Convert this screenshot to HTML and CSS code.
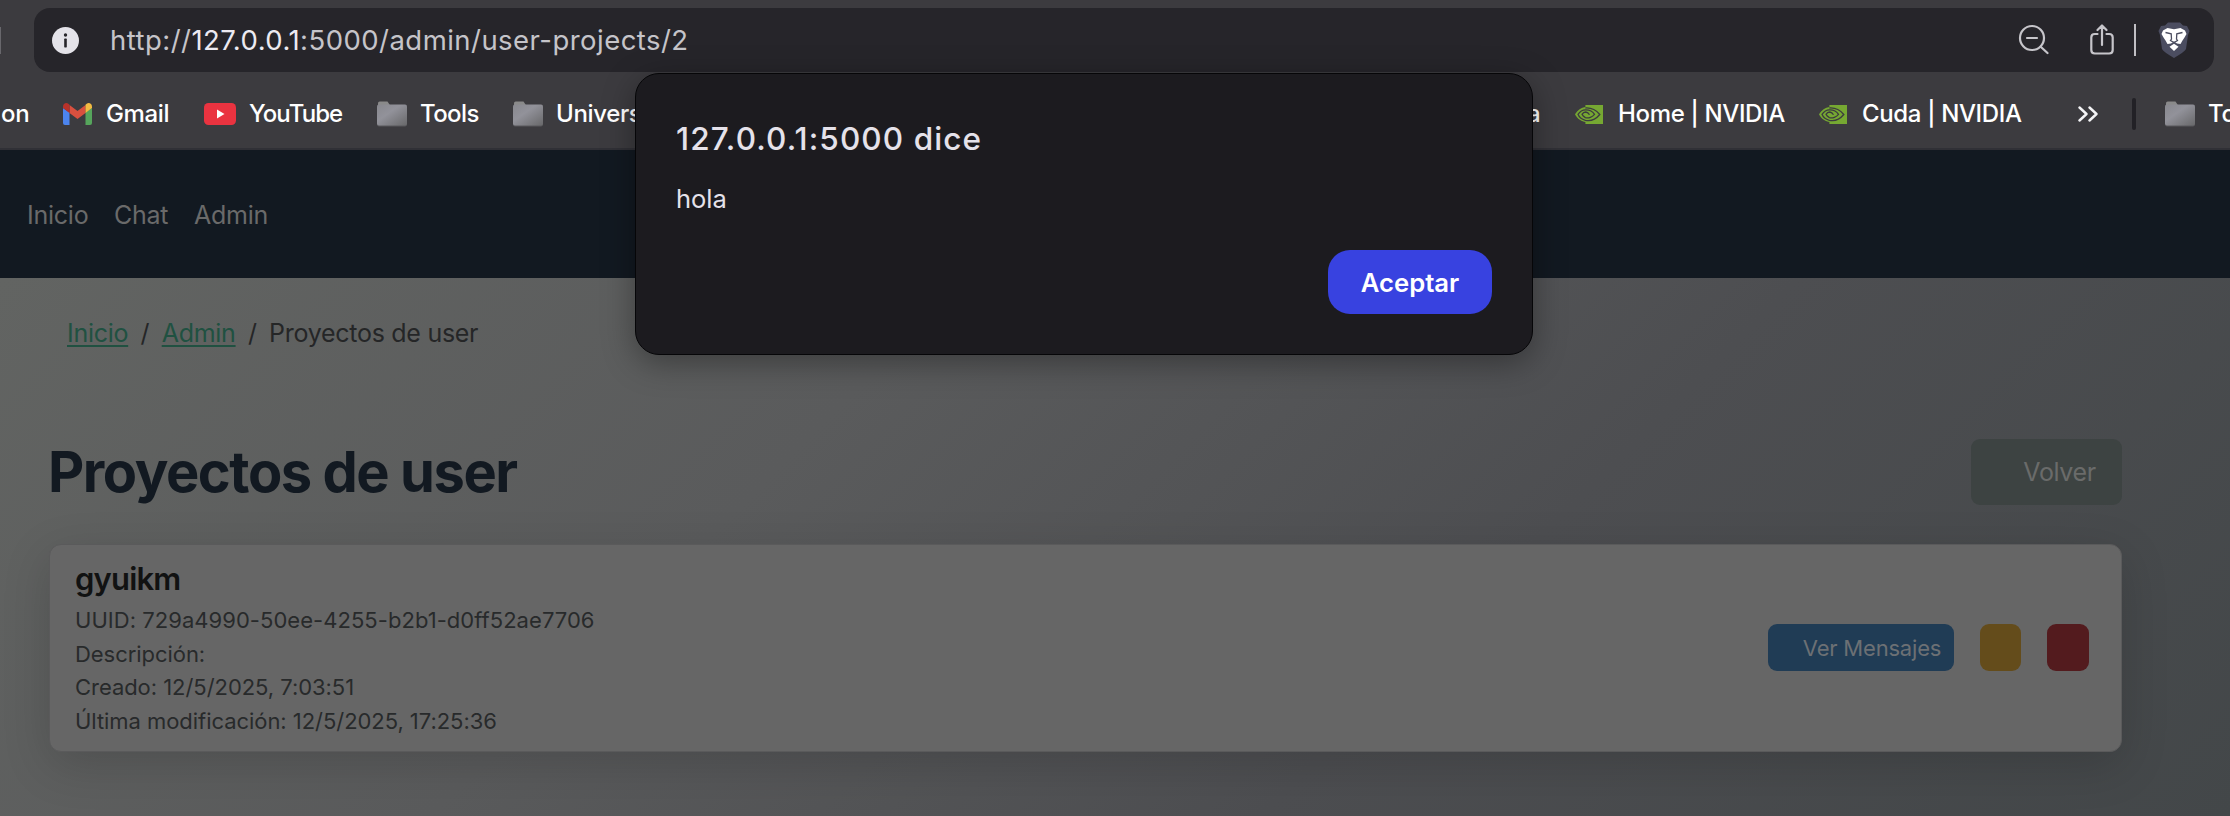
FILE: index.html
```
<!DOCTYPE html>
<html lang="es">
<head>
<meta charset="utf-8">
<title>Proyectos de user</title>
<link rel="stylesheet" href="styles.css">
</head>
<body>
<svg class="defs" width="0" height="0" aria-hidden="true">
  <defs>
    <linearGradient id="fold" x1="0" y1="0" x2="1" y2="1">
      <stop offset="0" stop-color="#88888e"/><stop offset=".4" stop-color="#92929a"/><stop offset="1" stop-color="#68686a"/>
    </linearGradient>
    <symbol id="folder" viewBox="0 0 30 26">
      <path d="M1 5V2.200Q1 .5 2.700 .5H10.500L12.500 3.500V5z" fill="#8a8a8a"/>
      <rect x="0" y="4" width="30" height="21.500" rx="2" fill="#58585c"/>
      <rect x="0" y="3.500" width="30" height="21" rx="2" fill="url(#fold)"/>
    </symbol>
    <symbol id="nvidia" viewBox="0 0 28 19">
      <path d="M10.400 0H28V19H10.400V17C4.500 16.200 1 11.500 0 9.300C2.500 5.200 6.200 2.400 10.400 1.900z" fill="#76a832"/>
      <path d="M10.400 3C17 2.500 21 5 24.800 9.500C21 14 15.500 16.500 10.400 15.300C6 14 3.800 11.500 3 9.300C5 6.500 7.500 5 10.400 4.900C15 4.700 18 7 19.500 9.300C17.500 11.800 13.500 13.700 10.400 12.600C8.300 11.500 7.300 10 7 9.300C8 7.600 9.500 7 10.800 7C13 7.200 13.800 8.500 14.500 9.800" fill="none" stroke="#3c3b3f" stroke-width="1.300"/>
    </symbol>
  </defs>
</svg>
<header class="chrome">
  <div class="toolbar">
    <span class="edge"></span>
    <div class="omnibox">
      <svg class="info" viewBox="0 0 27 27"><circle cx="13.500" cy="13.500" r="13.500" fill="#e4e3e9"/><circle cx="13.500" cy="8" r="1.700" fill="#26252a"/><rect x="12.200" y="11.600" width="2.600" height="8.800" rx=".6" fill="#26252a"/></svg>
      <span class="url">http://<b>127.0.0.1</b>:5000/admin/user-projects/2</span>
      <svg class="zoomout" viewBox="0 0 32 32"><g fill="none" stroke="#c6c5ca" stroke-width="2.200" stroke-linecap="round"><circle cx="14" cy="14" r="12"/><path d="M9 14h10M22.700 22.700L29.500 29"/></g></svg>
      <svg class="share" viewBox="0 0 24 32"><g fill="none" stroke="#c6c5ca" stroke-width="2.200" stroke-linecap="round" stroke-linejoin="round"><path d="M7.500 10H4.800Q1.300 10 1.300 13.500V26Q1.300 29.500 4.800 29.500H19.200Q22.700 29.500 22.700 26V13.500Q22.700 10 19.200 10H16.500M12 21V2M7.500 6L12 1.500L16.500 6"/></g></svg>
      <span class="vr"></span>
      <svg class="brave" viewBox="0 0 32 36"><path d="M10 .5H22L25 3.500L29 4L31.500 9L30 13L28 27Q27 29.500 16 36Q5 29.500 4 27L2 13L.5 9L3 4L7 3.500z" fill="#4b4d60"/><path d="M9.500 6L16 7.200L22.500 6L27 8.500L28.500 12L26.500 15.500L24.500 18.500L22.500 22L19 21.500L16 19.500L13 21.500L9.500 22L7.500 18.500L5.500 15.500L3.500 12L5 8.500z" fill="#fff"/><path d="M16 21.800L20.500 24.800L16 29L11.500 24.800z" fill="#fff"/><path d="M7.500 10.500L13.200 11.800L13.500 17L12.500 18.500L16 20.500L19.500 18.500L18.500 17L18.800 11.800L24.500 10.500" fill="none" stroke="#4b4d60" stroke-width="1.300"/></svg>
    </div>
  </div>
  <nav class="bookmarks">
    <span class="bm on">on</span>
    <span class="bm gmail"><svg viewBox="0 0 29 22"><path d="M0 5L6.500 9.500V22H2Q0 22 0 20z" fill="#4c84ee"/><path d="M29 5L22.500 9.500V22H27Q29 22 29 20z" fill="#56a55c"/><path d="M6.500 2V10L14.500 16L22.500 10V2L14.500 8z" fill="#d9503f"/><path d="M0 5V3.500Q.3 0 3.500 0Q5 .2 6.500 1.700V10L0 5z" fill="#b8322a"/><path d="M29 5V3.500Q28.700 0 25.500 0Q24 .2 22.500 1.700V10L29 5z" fill="#f3bb42"/></svg>Gmail</span>
    <span class="bm youtube"><svg viewBox="0 0 32 22"><rect width="32" height="22" rx="4.500" fill="#ea3340"/><path d="M13 6.500V15.500L20.500 11z" fill="#fff"/></svg>YouTube</span>
    <span class="bm tools"><svg><use href="#folder"/></svg>Tools</span>
    <span class="bm univ"><svg><use href="#folder"/></svg>Universidad</span>
    <span class="bm cut">a</span>
    <span class="bm home"><svg><use href="#nvidia"/></svg>Home | NVIDIA</span>
    <span class="bm cuda"><svg><use href="#nvidia"/></svg>Cuda | NVIDIA</span>
    <svg class="more" viewBox="0 0 20 16"><path d="M1.500 1.500L8.500 8L1.500 14.500M11.500 1.500L18.500 8L11.500 14.500" fill="none" stroke="#f4f4f6" stroke-width="2.400" stroke-linecap="round" stroke-linejoin="round"/></svg>
    <span class="split"></span>
    <span class="bm todos"><svg><use href="#folder"/></svg>To</span>
  </nav>
</header>
<nav class="navbar"><a class="n1">Inicio</a><a class="n2">Chat</a><a class="n3">Admin</a></nav>
<main class="page">
  <nav class="crumbs"><a class="c1">Inicio</a><span class="sl">/</span><a class="c2">Admin</a><span class="sl">/</span><span class="c3">Proyectos de user</span></nav>
  <div class="heading"><h1>Proyectos de user</h1><button class="back">Volver</button></div>
  <section class="card">
    <div class="details">
      <h2>gyuikm</h2>
      <p class="uuid">UUID: 729a4990-50ee-4255-b2b1-d0ff52ae7706</p>
      <p>Descripción:</p>
      <p>Creado: 12/5/2025, 7:03:51</p>
      <p>Última modificación: 12/5/2025, 17:25:36</p>
    </div>
    <div class="actions"><button class="view">Ver Mensajes</button><button class="edit" aria-label="Editar"></button><button class="del" aria-label="Eliminar"></button></div>
  </section>
</main>
<div class="dialog" role="dialog">
  <div class="dtitle">127.0.0.1:5000 dice</div>
  <div class="dmsg">hola</div>
  <button class="ok">Aceptar</button>
</div>
</body>
</html>
```
FILE: styles.css
```
* { box-sizing: border-box; }
body { margin: 0; width: 2230px; height: 816px; overflow: hidden; font-family: Inter, "Liberation Sans", sans-serif; background: #3c3b3f; position: relative; }
.defs { position: absolute; }
button { font: inherit; border: 0; padding: 0; }
span, a { white-space: nowrap; }
.chrome { height: 150px; background: #3c3b3f; border-bottom: 2px solid #303036; overflow: hidden; }
.toolbar { display: flex; padding-top: 8px; height: 80px; }
.edge { width: 1px; height: 27px; margin: 19px 33px 0 0; background: #68676c; }
.omnibox { width: 2180px; height: 64px; border-radius: 16px; background: #26252a; display: flex; align-items: center; }
.info { width: 27px; height: 27px; margin-left: 18px; flex: none; }
.url { margin-left: 31px; flex: 1; font-size: 27.500px; line-height: 64px; letter-spacing: .46px; color: #c5c4c9; }
.url b { font-weight: 400; color: #eceaf1; }
.zoomout { width: 32px; height: 32px; margin-right: 40px; }
.share { width: 24px; height: 32px; margin-right: 20px; }
.vr { width: 2px; height: 32px; background: #c0bfc4; margin-right: 22px; }
.brave { width: 32px; height: 36px; margin-right: 24px; }
.bookmarks { display: flex; align-items: center; height: 68px; color: #fff; font-size: 24px; }
.bm { display: flex; align-items: center; flex: none; font-weight: 500; line-height: 68px; letter-spacing: -.35px; }
.bm svg { flex: none; width: 30px; height: 26px; }
.on { width: 63px; padding-left: 1px; }
.gmail { width: 141px; }
.gmail svg { width: 29px; height: 22px; margin-right: 14px; }
.youtube { width: 173px; letter-spacing: -.9px; }
.youtube svg { width: 32px; height: 22px; margin-right: 13px; }
.tools { width: 136px; letter-spacing: -.6px; }
.tools svg, .univ svg, .todos svg { margin-right: 13px; }
.univ { width: 1014px; }
.cut { width: 48px; }
.home { width: 244px; }
.cuda { width: 259px; }
.bm.home svg, .bm.cuda svg { width: 28px; height: 19px; margin-right: 15px; }
.more { width: 20px; height: 16px; flex: none; margin-right: 34px; }
.split { width: 4px; height: 32px; border-radius: 2px; background: #222126; flex: none; margin-right: 29px; }
.navbar { height: 128px; background: #121921; display: flex; align-items: center; padding: 1px 0 0 27px; font-size: 25px; letter-spacing: -.25px; color: #6a6a6a; }
.n1 { width: 87px; }
.n2 { width: 80px; }
.page { height: 538px; padding-left: 49px; background: linear-gradient(135deg, #626462 0%, #5a5b5c 35%, #4d4e51 65%, #434749 100%); }
.crumbs { display: flex; height: 110px; padding-left: 18px; line-height: 111px; font-size: 25px; letter-spacing: -.28px; color: #252627; }
.crumbs a { color: #205141; text-decoration: underline; text-decoration-thickness: 2px; text-underline-offset: 3px; }
.sl { width: 33.500px; text-align: center; }
.heading { display: flex; justify-content: space-between; width: 2073px; padding-top: 51px; height: 156px; }
h1 { margin: 0 0 0 -1px; font-size: 56px; line-height: 67px; font-weight: 700; letter-spacing: -1.450px; color: #121921; }
.back { width: 151px; height: 66px; border-radius: 9px; background: #3d4342; color: #6a6b6a; font-size: 25px; letter-spacing: -.4px; padding-left: 26px; }
.card { display: flex; justify-content: space-between; width: 2073px; height: 208px; border: 1px solid #5a5a5b; border-radius: 12px; background: #666; box-shadow: 0 13px 48px rgba(0,0,0,.16); padding: 14px 32px 0 25px; }
h2 { margin: 0 0 6px; font-size: 31px; line-height: 39px; font-weight: 600; letter-spacing: -.8px; color: #111212; }
p { margin: 0; font-size: 22px; line-height: 33.600px; letter-spacing: -.05px; color: #282a2b; }
.uuid { letter-spacing: .04px; }
.actions { display: flex; height: 47px; margin-top: 65px; }
.view { width: 186px; border-radius: 9px; background: #203c55; color: #6c7074; font-size: 22px; letter-spacing: -.2px; padding-left: 22px; margin-right: 26px; }
.edit { width: 41px; border-radius: 9px; background: #644c1b; margin-right: 26px; }
.del { width: 42px; border-radius: 9px; background: #531b1e; }
.dialog { position: absolute; left: 635px; top: 73px; width: 898px; height: 282px; border: 1px solid #060608; border-radius: 24px; background: #1c1b1f; box-shadow: 0 8px 32px rgba(0,0,0,.35); padding: 41px 40px 0 40px; color: #e5e2ea; display: flex; flex-direction: column; }
.dtitle { font-size: 31.500px; line-height: 48px; font-weight: 500; letter-spacing: 1.1px; }
.dmsg { font-size: 25.500px; line-height: 40px; margin-top: 16px; }
.ok { width: 164px; height: 64px; margin: 31px 0 0 auto; border-radius: 22px; background: #3842e0; color: #fff; font-size: 25.700px; font-weight: 600; }
```
